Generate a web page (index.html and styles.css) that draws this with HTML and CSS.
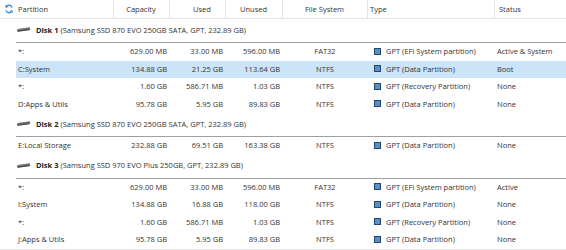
FILE: index.html
```html
<!DOCTYPE html>
<html lang="en">
<head>
    <meta charset="UTF-8">
    <title>Partitions</title>
    <link rel="stylesheet" href="styles.css">
</head>
<body>
    <div class="list">
        <div class="row head">
            <div class="refresh">
                <svg width="10" height="10" viewBox="0 0 10 10">
                    <path d="M8.2 3.6A3.4 3.4 0 0 0 2 3" fill="none" stroke="#3a8fd6" stroke-width="1.4"/>
                    <path d="M0.8 1.2L2.2 4.2L4.4 2.2Z" fill="#3a8fd6"/>
                    <path d="M1.8 6.4A3.4 3.4 0 0 0 8 7" fill="none" stroke="#3a8fd6" stroke-width="1.4"/>
                    <path d="M9.2 8.8L7.8 5.8L5.6 7.8Z" fill="#3a8fd6"/>
                </svg>
            </div>
            <div class="cell name">Partition</div>
            <div class="cell mid">Capacity</div>
            <div class="cell mid used">Used</div>
            <div class="cell mid">Unused</div>
            <div class="cell mid">File System</div>
            <div class="cell">Type</div>
            <div class="cell last">Status</div>
        </div>

        <div class="disk">
            <span class="drive"></span><b>Disk 1</b>&nbsp;(Samsung SSD 870 EVO 250GB SATA, GPT, 232.89 GB)
        </div>
        <div class="row">
            <div></div>
            <div class="cell name">*:</div>
            <div class="cell num">629.00 MB</div>
            <div class="cell num">33.00 MB</div>
            <div class="cell num">596.00 MB</div>
            <div class="cell mid">FAT32</div>
            <div class="cell type"><span class="sq"></span>GPT (EFI System partition)</div>
            <div class="cell">Active &amp; System</div>
        </div>
        <div class="row selected">
            <div></div>
            <div class="cell name">C:System</div>
            <div class="cell num">134.88 GB</div>
            <div class="cell num">21.25 GB</div>
            <div class="cell num">113.64 GB</div>
            <div class="cell mid">NTFS</div>
            <div class="cell type"><span class="sq"></span>GPT (Data Partition)</div>
            <div class="cell">Boot</div>
        </div>
        <div class="row">
            <div></div>
            <div class="cell name">*:</div>
            <div class="cell num">1.60 GB</div>
            <div class="cell num">586.71 MB</div>
            <div class="cell num">1.03 GB</div>
            <div class="cell mid">NTFS</div>
            <div class="cell type"><span class="sq"></span>GPT (Recovery Partition)</div>
            <div class="cell">None</div>
        </div>
        <div class="row">
            <div></div>
            <div class="cell name">D:Apps &amp; Utils</div>
            <div class="cell num">95.78 GB</div>
            <div class="cell num">5.95 GB</div>
            <div class="cell num">89.83 GB</div>
            <div class="cell mid">NTFS</div>
            <div class="cell type"><span class="sq"></span>GPT (Data Partition)</div>
            <div class="cell">None</div>
        </div>

        <div class="disk">
            <span class="drive"></span><b>Disk 2</b>&nbsp;(Samsung SSD 870 EVO 250GB SATA, GPT, 232.89 GB)
        </div>
        <div class="row">
            <div></div>
            <div class="cell name">E:Local Storage</div>
            <div class="cell num">232.88 GB</div>
            <div class="cell num">69.51 GB</div>
            <div class="cell num">163.38 GB</div>
            <div class="cell mid">NTFS</div>
            <div class="cell type"><span class="sq"></span>GPT (Data Partition)</div>
            <div class="cell">None</div>
        </div>

        <div class="disk">
            <span class="drive"></span><b>Disk 3</b>&nbsp;(Samsung SSD 970 EVO Plus 250GB, GPT, 232.89 GB)
        </div>
        <div class="row">
            <div></div>
            <div class="cell name">*:</div>
            <div class="cell num">629.00 MB</div>
            <div class="cell num">33.00 MB</div>
            <div class="cell num">596.00 MB</div>
            <div class="cell mid">FAT32</div>
            <div class="cell type"><span class="sq"></span>GPT (EFI System partition)</div>
            <div class="cell">Active</div>
        </div>
        <div class="row">
            <div></div>
            <div class="cell name">I:System</div>
            <div class="cell num">134.88 GB</div>
            <div class="cell num">16.88 GB</div>
            <div class="cell num">118.00 GB</div>
            <div class="cell mid">NTFS</div>
            <div class="cell type"><span class="sq"></span>GPT (Data Partition)</div>
            <div class="cell">None</div>
        </div>
        <div class="row">
            <div></div>
            <div class="cell name">*:</div>
            <div class="cell num">1.60 GB</div>
            <div class="cell num">586.71 MB</div>
            <div class="cell num">1.03 GB</div>
            <div class="cell mid">NTFS</div>
            <div class="cell type"><span class="sq"></span>GPT (Recovery Partition)</div>
            <div class="cell">None</div>
        </div>
        <div class="row last-row">
            <div></div>
            <div class="cell name">J:Apps &amp; Utils</div>
            <div class="cell num">95.78 GB</div>
            <div class="cell num">5.95 GB</div>
            <div class="cell num">89.83 GB</div>
            <div class="cell mid">NTFS</div>
            <div class="cell type"><span class="sq"></span>GPT (Data Partition)</div>
            <div class="cell">None</div>
        </div>
    </div>
</body>
</html>
```

FILE: styles.css
```css
* {
    box-sizing: border-box;
}
body {
    margin: 0;
    background-color: white;
    font-family: "Open Sans", "Noto Sans", sans-serif;
    font-size: 7.5px;
    color: #333;
}
.list {
    width: 566px;
}
.row {
    display: grid;
    grid-template-columns: 16px 98px 56px 56px 57px 85px 127px 1fr;
    height: 17.5px;
    align-items: center;
}
.cell {
    padding: 0 3px 1px 2px;
    white-space: nowrap;
    overflow: hidden;
}
.num {
    text-align: right;
}
.mid {
    text-align: center;
}
.head {
    height: 19px;
    border-bottom: 1px solid #e6e6e6;
}
.head .cell {
    height: 18px;
    line-height: 18px;
    padding-bottom: 0;
    border-right: 1px solid #e2e2e2;
}
.head .used {
    padding-left: 12px;
}
.head .last {
    border-right: none;
    padding-left: 4px;
}
.refresh {
    display: flex;
    align-items: center;
    justify-content: center;
    padding-left: 1px;
}
.selected {
    background: linear-gradient(to right, white 16px, #cce4f7 16px);
}
.disk {
    display: flex;
    align-items: center;
    height: 24px;
    margin-left: 16px;
    padding: 0 0 2px 1px;
    border-bottom: 1px solid #a0a0a0;
}
.disk b {
    color: #222;
}
.drive {
    display: inline-block;
    width: 13px;
    height: 3px;
    margin-right: 6px;
    background: linear-gradient(#8a8a8a, #3c3c3c);
    border-radius: 2px 1px 1px 2px;
    transform: skewY(-8deg);
}
.type {
    display: flex;
    align-items: center;
    padding-left: 6px;
}
.sq {
    display: inline-block;
    width: 7px;
    height: 7px;
    margin-right: 5px;
    background-color: #5a8fc4;
    border: 1px solid #23466f;
}
.last-row {
    height: 18.5px;
    border-bottom: 1px solid #e6e6e6;
}
```
